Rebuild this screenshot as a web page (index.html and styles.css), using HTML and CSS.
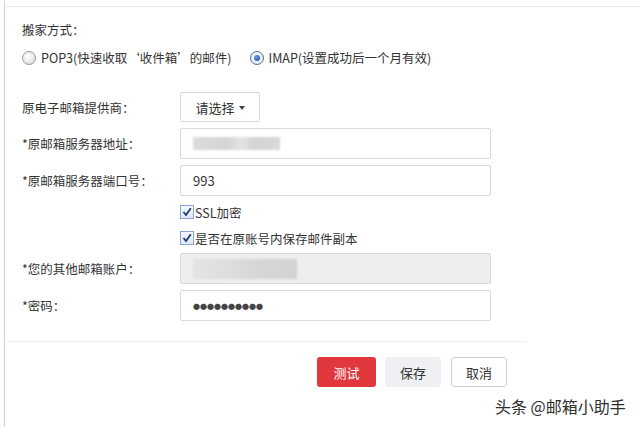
FILE: index.html
```html
<!DOCTYPE html>
<html lang="zh-CN">
<head>
    <meta charset="UTF-8">
    <meta name="viewport" content="width=device-width, initial-scale=1.0">
    <title>邮箱搬家</title>
    <link rel="stylesheet" href="styles.css">
</head>
<body>

<div class="frame">
    <div class="panel">
        <div class="mode-title">搬家方式：</div>
        <div class="mode-row">
            <label class="radio"><span class="dot"></span>POP3(快速收取‘收件箱’的邮件)</label>
            <label class="radio"><span class="dot on"></span>IMAP(设置成功后一个月有效)</label>
        </div>

        <div class="form">
            <div class="row row-select">
                <div class="label">原电子邮箱提供商：</div>
                <div class="select">请选择 <span class="caret"></span></div>
            </div>
            <div class="row">
                <div class="label">*原邮箱服务器地址：</div>
                <div class="input"><span class="blur"></span></div>
            </div>
            <div class="row">
                <div class="label">*原邮箱服务器端口号：</div>
                <div class="input">993</div>
            </div>
            <div class="check-row first">
                <span class="check"><svg viewBox="0 0 12 12" width="12" height="12"><path d="M2.5 6 L5 9 L9.8 2.2" fill="none" stroke="#1d3c78" stroke-width="1.8"/></svg></span>SSL加密
            </div>
            <div class="check-row">
                <span class="check"><svg viewBox="0 0 12 12" width="12" height="12"><path d="M2.5 6 L5 9 L9.8 2.2" fill="none" stroke="#1d3c78" stroke-width="1.8"/></svg></span>是否在原账号内保存邮件副本
            </div>
            <div class="row row-account">
                <div class="label">*您的其他邮箱账户：</div>
                <div class="input disabled"><span class="blur wide"></span></div>
            </div>
            <div class="row">
                <div class="label">*密码：</div>
                <div class="input pwd">●●●●●●●●●●</div>
            </div>
        </div>

        <div class="actions">
            <button class="btn btn-test">测试</button>
            <button class="btn btn-save">保存</button>
            <button class="btn btn-cancel">取消</button>
        </div>
    </div>
</div>

<div class="mark">头条 @邮箱小助手</div>

</body>
</html>
```

FILE: styles.css
```css
body {
    margin: 0;
    padding: 0;
    background: #fff;
    font-family: "Noto Sans CJK SC", "Noto Sans", sans-serif;
    font-size: 12.5px;
    color: #333;
    width: 640px;
    height: 427px;
    overflow: hidden;
    position: relative;
}

.frame {
    margin-left: 4px;
    border-left: 1px solid #d2d2d2;
    height: 427px;
    padding-top: 6px;
    box-sizing: border-box;
}

.panel {
    border-top: 1px solid #ebebeb;
    padding-top: 13px;
}

.mode-title {
    line-height: 20px;
    padding-left: 17px;
}

.mode-row {
    display: flex;
    gap: 18px;
    margin-top: 8px;
    padding-left: 17px;
    line-height: 20px;
}

.radio {
    display: flex;
    align-items: center;
}

.dot {
    width: 12px;
    height: 12px;
    border-radius: 50%;
    border: 1px solid #9a9a9a;
    background: radial-gradient(circle at 40% 35%, #fff 0, #e4e4e4 70%, #cfcfcf 100%);
    margin-right: 5px;
    position: relative;
}

.dot.on {
    border-color: #4f6f9f;
    background: radial-gradient(circle at 40% 35%, #fff 0, #dfe8f5 80%);
}

.dot.on::after {
    content: "";
    position: absolute;
    left: 3px;
    top: 3px;
    width: 6px;
    height: 6px;
    border-radius: 50%;
    background: radial-gradient(circle at 40% 35%, #6aa0e8 0, #1f4f9e 90%);
}

.form {
    margin-top: 24px;
    padding-left: 17px;
}

.row {
    display: flex;
    align-items: center;
    margin-top: 6px;
}

.row-select {
    margin-top: 0;
}

.label {
    width: 158px;
    flex: none;
}

.select {
    width: 80px;
    height: 30px;
    box-sizing: border-box;
    border: 1px solid #d6d6d6;
    border-radius: 2px;
    display: flex;
    align-items: center;
    justify-content: center;
    gap: 4px;
    font-size: 13px;
}

.caret {
    width: 0;
    height: 0;
    border-left: 3px solid transparent;
    border-right: 3px solid transparent;
    border-top: 4px solid #444;
    margin-top: 1px;
}

.input {
    width: 311px;
    height: 31px;
    box-sizing: border-box;
    border: 1px solid #d9d9d9;
    border-radius: 2px;
    padding-left: 12px;
    display: flex;
    align-items: center;
    font-size: 13px;
}

.input.disabled {
    background: #eeeeee;
}

.input.pwd {
    font-size: 7px;
    color: #444;
}

.blur {
    display: block;
    width: 87px;
    height: 13px;
    background: linear-gradient(90deg, #dcdcdc 0, #d4d4d4 40%, #e4e4e4 55%, #d4d4d4 70%, #d9d9d9 100%);
    filter: blur(0.8px);
}

.blur.wide {
    width: 104px;
    height: 20px;
    background: linear-gradient(90deg, #e4e4e4 0, #dedede 30%, #d7d7d7 60%, #d3d3d3 100%);
}

.check-row {
    display: flex;
    align-items: center;
    margin-left: 158px;
    height: 26px;
}

.check-row.first {
    margin-top: 3px;
}

.check {
    width: 12px;
    height: 12px;
    border: 1px solid #8aa6d2;
    background: linear-gradient(#f4f8ff, #dfe8f6);
    display: flex;
    margin-right: 1px;
}

.row-account {
    margin-top: 2px;
}

.actions {
    width: 520px;
    border-top: 1px solid #efefef;
    margin-top: 20px;
    padding-top: 15px;
    display: flex;
    justify-content: flex-end;
    gap: 10px;
    box-sizing: border-box;
    padding-right: 18px;
}

.btn {
    height: 30px;
    width: 56px;
    border-radius: 3px;
    font-family: inherit;
    font-size: 13px;
    color: #333;
    padding: 0;
}

.btn-test {
    width: 59px;
    background: #e0383d;
    border: none;
    color: #fff;
}

.btn-save {
    background: #eef0f3;
    border: none;
    margin-left: -1px;
}

.btn-cancel {
    background: #fff;
    border: 1px solid #cfcfcf;
}

.mark {
    position: absolute;
    left: 495px;
    top: 395px;
    font-size: 16px;
    line-height: 22px;
    color: #2e2e2e;
    text-shadow: 0 0 2px #fff, 0 0 2px #fff;
}
```
